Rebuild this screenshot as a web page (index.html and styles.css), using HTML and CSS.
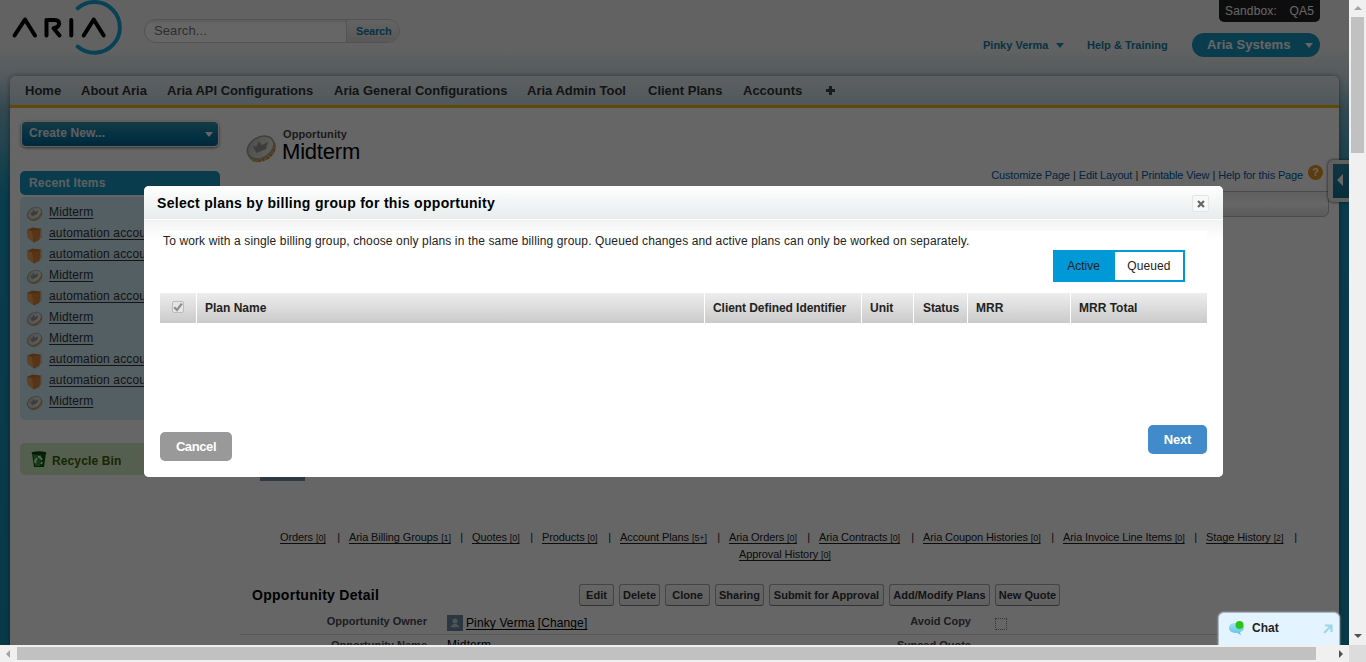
FILE: index.html
```html
<!DOCTYPE html>
<html lang="en">
<head>
<meta charset="utf-8">
<title>Opportunity: Midterm</title>
<link rel="stylesheet" href="styles.css">
</head>
<body>
<svg class="defs" width="0" height="0">
  <defs>
    <linearGradient id="face" x1="0" y1="0" x2="1" y2="1"><stop offset="0" stop-color="#c4c4c4"/><stop offset="1" stop-color="#f0f0ec"/></linearGradient>
    <linearGradient id="bubble" x1="0" y1="0" x2="0" y2="1"><stop offset="0" stop-color="#a6e0f2"/><stop offset="1" stop-color="#58c4e8"/></linearGradient>
    <symbol id="coin" viewBox="0 0 32 32">
      <ellipse cx="17" cy="18" rx="15" ry="11" transform="rotate(-32 17 18)" fill="#d9ab5c"/>
      <path d="M14 28l1 2M18 27l1 2M22 25l2 2M25 22l2 2M28 18l2 1" stroke="#a8741c" stroke-width="1"/>
      <ellipse cx="15.500" cy="15.500" rx="15" ry="11" transform="rotate(-32 15.500 15.500)" fill="#a3a39c"/>
      <ellipse cx="15.700" cy="15.500" rx="13.300" ry="9.400" transform="rotate(-32 15.700 15.500)" fill="url(#face)"/>
      <path d="M7.500 13.500l4 1.500 2-6 3.500 4 6-3-2 7-9.500 4z" fill="#999"/>
    </symbol>
    <symbol id="folder" viewBox="0 0 16 16">
      <path d="M10 3l4.500-1.500L15 10l-4 5z" fill="#d9b48c"/>
      <path d="M1 3.500L6 1.500l6 .5 1.500 1-1 9.500-4.500 3-6-4z" fill="#c9772f"/>
      <path d="M1 3.500l5 1.500 1 10-5.500-4z" fill="#f0a45c"/>
      <path d="M6 5l7-1.500-.8 9L7 15.500z" fill="#dd8638"/>
    </symbol>
  </defs>
</svg>
<div class="window">
  <div class="viewport">
    <header class="top">
      <svg class="logo" width="124" height="58" viewBox="0 0 124 58" fill="none" stroke-linecap="round" stroke-linejoin="round" stroke-width="4">
        <path d="M77.700 8.300A25.400 25.400 0 1 1 77.700 46.500" stroke="#17a3d6"/>
        <g stroke="#000"><path d="M14.500 35.500L25 19.500L35 35.500"/><path d="M46.500 35.500V20H54.500C59 20 60 23 58.500 25.500Q57.500 27.500 53.500 28.200L59.500 35.500"/><path d="M71.300 20V35.500"/><path d="M83.700 35.500L93.700 19.500L103.700 35.500"/></g>
      </svg>
      <div class="search"><span class="search-field">Search...</span><span class="search-button">Search</span></div>
      <div class="account">
        <div class="sandbox"><span>Sandbox:</span><span>QA5</span></div>
        <div class="links">
          <span class="user">Pinky Verma</span><i class="caret teal"></i>
          <span class="help">Help &amp; Training</span>
          <div class="app-menu"><span>Aria Systems</span><i class="caret white"></i></div>
        </div>
      </div>
    </header>
    <div class="page">
      <nav class="tabs"><span>Home</span><span>About Aria</span><span>Aria API Configurations</span><span>Aria General Configurations</span><span>Aria Admin Tool</span><span>Client Plans</span><span>Accounts</span><svg width="9" height="9" viewBox="0 0 9 9"><path d="M3 0h3v3h3v3H6v3H3V6H0V3h3z" fill="#444"/></svg></nav>
      <div class="columns">
        <aside class="sidebar">
          <div class="create"><span>Create New...</span><i class="caret white"></i></div>
          <div class="recent-title">Recent Items</div>
          <ul class="recent">
            <li><svg><use href="#coin"/></svg><a>Midterm</a></li>
            <li><svg><use href="#folder"/></svg><a>automation account 1</a></li>
            <li><svg><use href="#folder"/></svg><a>automation account 2</a></li>
            <li><svg><use href="#coin"/></svg><a>Midterm</a></li>
            <li><svg><use href="#folder"/></svg><a>automation account 3</a></li>
            <li><svg><use href="#coin"/></svg><a>Midterm</a></li>
            <li><svg><use href="#coin"/></svg><a>Midterm</a></li>
            <li><svg><use href="#folder"/></svg><a>automation account 4</a></li>
            <li><svg><use href="#folder"/></svg><a>automation account 5</a></li>
            <li><svg><use href="#coin"/></svg><a>Midterm</a></li>
          </ul>
          <div class="recycle">
            <svg width="16" height="17" viewBox="0 0 16 17"><path d="M1 2h14l-2 14H3z" fill="#0a5a10"/><path d="M2 3h8l-1 12H4z" fill="#2e9c35"/><ellipse cx="8" cy="2" rx="7.500" ry="1.700" fill="#123f14"/><path d="M5 12l-1-2 2-3M7 6h2l2 3M11 11l-1 2" fill="none" stroke="#e8f6e8" stroke-width="1.800"/></svg>
            <span>Recycle Bin</span>
          </div>
        </aside>
        <main class="record">
          <div class="record-head">
            <svg class="record-icon"><use href="#coin"/></svg>
            <div><div class="record-type">Opportunity</div><h1>Midterm</h1></div>
          </div>
          <div class="page-links"><a>Customize Page</a><i>|</i><a>Edit Layout</a><i>|</i><a>Printable View</a><i>|</i><a>Help for this Page</a><b>?</b></div>
          <div class="feed-bar"></div>
          <div class="avatar"></div>
          <div class="related">
            <span><a>Orders <small>[0]</small></a><i>|</i></span><span><a>Aria Billing Groups <small>[1]</small></a><i>|</i></span><span><a>Quotes <small>[0]</small></a><i>|</i></span><span><a>Products <small>[0]</small></a><i>|</i></span><span><a>Account Plans <small>[5+]</small></a><i>|</i></span><span><a>Aria Orders <small>[0]</small></a><i>|</i></span><span><a>Aria Contracts <small>[0]</small></a><i>|</i></span><span><a>Aria Coupon Histories <small>[0]</small></a><i>|</i></span><span><a>Aria Invoice Line Items <small>[0]</small></a><i>|</i></span><span><a>Stage History <small>[2]</small></a><i>|</i></span>
          </div>
          <div class="related-last"><a>Approval History <small>[0]</small></a></div>
          <div class="detail-head">
            <h2>Opportunity Detail</h2>
            <div class="actions"><span>Edit</span><span>Delete</span><span>Clone</span><span>Sharing</span><span>Submit for Approval</span><span>Add/Modify Plans</span><span>New Quote</span></div>
          </div>
          <div class="field-row">
            <b>Opportunity Owner</b>
            <div class="owner"><svg width="16" height="16" viewBox="0 0 16 16"><path fill="#708ba2" d="M0 0h16v16H0z"/><circle cx="8" cy="6" r="2.500" fill="#c8d2da"/><path d="M4 12.300v-1.500l2.800-1.800h2.400l2.800 1.800v1.500z" fill="#c8d2da"/></svg><a>Pinky Verma</a><a>[Change]</a></div>
            <b>Avoid Copy</b><i class="unchecked"></i>
          </div>
          <div class="field-row second"><b>Opportunity Name</b><div>Midterm</div><b>Synced Quote</b><i></i></div>
        </main>
      </div>
    </div>
    <div class="feed-tab"><div><i></i></div></div>
    <div class="shade"></div>
    <section class="dialog">
      <header><h3>Select plans by billing group for this opportunity</h3><span class="close"><svg width="8" height="8" viewBox="0 0 8 8"><path d="M1 1l6 6M7 1L1 7" stroke="#666" stroke-width="2.200"/></svg></span></header>
      <div class="dialog-body">
        <div class="content">
          <p>To work with a single billing group, choose only plans in the same billing group. Queued changes and active plans can only be worked on separately.</p>
          <div class="toggle"><span class="on">Active</span><span class="off">Queued</span></div>
          <div class="thead"><span><i class="check"><svg width="10" height="10" viewBox="0 0 10 10"><path d="M1.200 5.200L4 8L8.800 1.600" fill="none" stroke="#8f8f8f" stroke-width="2.300"/></svg></i></span><span>Plan Name</span><span class="ident">Client Defined Identifier</span><span>Unit</span><span class="status">Status</span><span>MRR</span><span>MRR Total</span></div>
          <div class="buttons"><span class="cancel">Cancel</span><span class="next">Next</span></div>
        </div>
      </div>
    </section>
    <div class="chat">
      <svg width="17" height="16" viewBox="0 0 17 16"><path d="M7 3C2 3 1 6 1 8c0 4 4 5 8 5l4 2-1-3c3-1 4-2 4-5 0-3-4-4-9-4z" fill="url(#bubble)"/><circle cx="11.500" cy="5" r="4" fill="#2bc51a"/></svg>
      <span>Chat</span>
      <svg width="10" height="10" viewBox="0 0 10 10"><path d="M1 9L8 2M2 1.500H8.500V8" fill="none" stroke="#9fd6ea" stroke-width="2.200"/></svg>
    </div>
  </div>
  <div class="vbar"><i class="up"></i><div></div><i class="down"></i></div>
  <div class="hbar"><i class="left"></i><div></div><i class="right"></i></div>
  <div class="corner"></div>
</div>
</body>
</html>
```
FILE: styles.css
```css
* { box-sizing: border-box; }
body { margin: 0; overflow: hidden; font: 12px/14px "Liberation Sans", Arial, sans-serif; color: #222; }
i { font-style: normal; }
h1, h2, h3, p, ul { margin: 0; padding: 0; }
.defs { position: absolute; }
.window { display: grid; grid-template: 645px 17px / 1349px 17px; width: 1366px; height: 662px; }
.viewport { position: relative; overflow: hidden; background: linear-gradient(#f5f5f5 0, #f5f5f5 48px, #d3e3e8 76px, #7db5c8 110px, #1797c0 195px, #178fb5 645px); white-space: nowrap; }

.caret { width: 0; height: 0; border: 4px solid transparent; border-top: 5px solid #fff; border-bottom: 0; }
.caret.teal { border-top-color: #1797c0; }

.top { display: flex; height: 76px; }
.logo { flex: none; width: 124px; }
.search { display: flex; width: 256px; height: 24px; margin: 19px 0 0 20px; border: 1px solid #cfcfcf; border-radius: 12px; overflow: hidden; background: linear-gradient(#e2e2e2, #fff 4px); }
.search-field { width: 201px; padding-left: 9px; font-size: 13px; line-height: 22px; color: #777; letter-spacing: .1px; }
.search-button { flex: 1; padding-left: 9px; border-left: 1px solid #cfcfcf; background: linear-gradient(#f8f8f8, #dedede); font-weight: bold; font-size: 11px; line-height: 23px; color: #1680a5; letter-spacing: -.2px; }
.account { display: flex; flex-direction: column; width: 337px; margin-left: auto; margin-right: 29px; }
.sandbox { display: flex; justify-content: space-between; width: 101px; height: 22px; margin-left: auto; padding: 3px 6px 0; border-radius: 0 0 5px 5px; background: #222; color: #fff; line-height: 16px; letter-spacing: .15px; }
.links { display: flex; align-items: center; height: 24px; margin-top: 11px; font-weight: bold; font-size: 11px; color: #1680a5; }
.user { width: 73px; }
.help { width: 105px; margin-left: 23px; }
.app-menu { display: flex; align-items: center; justify-content: space-between; width: 128px; height: 24px; padding: 0 7px 0 15px; border-radius: 12px; background: #1797c0; color: #fff; font-size: 13px; letter-spacing: .1px; }

.page { width: 1329px; height: 600px; margin-left: 10px; border-radius: 6px 6px 0 0; background: #fff; box-shadow: 0 0 5px rgba(0,0,0,.4); }
.tabs { display: grid; grid-template-columns: 56px 86px 167px 193px 121px 95px 83px 9px; align-items: center; height: 32px; padding: 0 15px; border-bottom: 3px solid #e8b715; border-radius: 6px 6px 0 0; background: linear-gradient(#eaf0f2, #ccdde4); font-size: 13px; font-weight: bold; color: #333; }
.columns { display: flex; }

.sidebar { width: 210px; padding: 13px 0 0 10px; }
.create { display: flex; justify-content: space-between; height: 26px; margin: 0 1px; padding: 4px 5px 0 7px; border: 1px solid #eee; border-radius: 5px; box-shadow: 0 1px 3px #777; background: linear-gradient(#3a8fae, #087aa8 60%, #006690); color: #eee; font-weight: bold; letter-spacing: .1px; }
.create .caret { margin-top: 6px; }
.recent-title { height: 24px; margin-top: 24px; padding: 5px 9px; border-radius: 5px; background: #1797c0; color: #e6eef2; font-weight: bold; letter-spacing: .15px; }
.recent { height: 223px; margin-top: 2px; padding: 5px 6px; border-radius: 5px; background: #cfeef8; list-style: none; overflow: hidden; }
.recent li { display: flex; height: 21px; line-height: 20px; color: #333; }
.recent svg { flex: none; width: 17px; height: 17px; margin: 3px 6px 0 0; }
.recent a { letter-spacing: .15px; text-decoration: underline; text-underline-offset: 2px; }
.recycle { display: flex; align-items: center; height: 32px; margin-top: 23px; padding-left: 11px; border-radius: 5px; background: #d5edc9; color: #3b6100; font-weight: bold; }
.recycle span { margin: 3px 0 0 5px; letter-spacing: .12px; }

.record { width: 1119px; padding: 20px 10px 0 32px; }
.record-head { display: flex; height: 40px; margin-left: -10px; }
.record-icon { width: 32px; height: 32px; margin: 4px 6px 0 3px; }
.record-type { line-height: 13px; font-size: 11px; font-weight: bold; color: #444; letter-spacing: .1px; }
h1 { margin-left: -1px; font-size: 22px; line-height: 22px; font-weight: normal; color: #000; letter-spacing: -.2px; }
.page-links { display: flex; justify-content: flex-end; height: 23px; padding-right: 6px; font-size: 11px; line-height: 15px; color: #015ba7; letter-spacing: -.15px; }
.page-links i { width: 9px; text-align: center; color: #333; }
.page-links b { width: 15px; height: 15px; margin: -3px 0 0 5px; border-radius: 50%; background: #e7961c; text-align: center; color: #fff; }
.feed-bar { height: 26px; border: 1px solid #bbb; border-radius: 0 0 6px 0; background: linear-gradient(#eee, #fff 12px, #e4e4e4); }
.avatar { width: 45px; height: 45px; margin: 219px 0 0 8px; background: #738fa5; }
.related { display: grid; grid-template-columns: 69px 123px 70px 78px 109px 90px 104px 140px 143px 100px; height: 17px; margin: 49px 0 0 28px; font-size: 11px; letter-spacing: -.1px; }
.related span { display: flex; justify-content: space-between; padding-right: 9px; }
.related a, .related-last a, .owner a { text-decoration: underline; text-underline-offset: 1.5px; }
.related small, .related-last small { font-size: 9px; }
.related-last { padding-left: 487px; font-size: 11px; letter-spacing: -.1px; }
.detail-head { display: flex; align-items: center; height: 22px; margin-top: 22px; }
h2 { width: 327px; font-size: 14px; color: #000; letter-spacing: .28px; }
.actions { display: grid; grid-template-columns: 35px 41px 45px 49px 115px 101px 65px; column-gap: 5px; height: 22px; }
.actions span { border: 1px solid #aaa; border-bottom-color: #7f7f7f; border-radius: 3px; background: linear-gradient(#fff, #f0f0f0); text-align: center; font-size: 11px; font-weight: bold; line-height: 20px; color: #333; }
.field-row { display: grid; grid-template-columns: 187px 384px 160px 12px; height: 29px; margin-left: -12px; border-bottom: 1px solid #ddd; font-size: 12px; color: #000; }
.field-row b { padding-top: 8px; color: #4a4a56; font-size: 11px; text-align: right; }
.field-row > :nth-child(2) { padding: 9px 0 0 20px; }
.owner { display: flex; letter-spacing: .12px; }
.owner svg { margin-right: 3px; }
.owner a { line-height: 17px; margin-right: 3px; }
.unchecked { width: 12px; height: 12px; margin: 12px 0 0 24px; border: 1px dotted #888; }
.field-row.second b { padding-top: 3px; }
.field-row.second > div { padding-top: 3px; letter-spacing: .1px; }

.feed-tab { position: absolute; left: 1328px; top: 160px; width: 25px; height: 42px; padding: 4px 0 4px 5px; border-radius: 5px; background: #eee; box-shadow: 0 0 3px #333; }
.feed-tab div { height: 34px; padding: 10px 0 0 4px; background: linear-gradient(#2a86a6, #147296); }
.feed-tab i { display: block; width: 0; border: 6px solid transparent; border-right-color: #fff; border-left: 0; }
.shade { position: absolute; inset: 0; background: rgba(0,0,0,.6); }

.dialog { position: absolute; left: 144px; top: 186px; width: 1079px; height: 291px; border-radius: 5px; background: #fff; overflow: hidden; }
.dialog header { display: flex; justify-content: space-between; height: 34px; padding: 9px 14px 0 13px; border-bottom: 1px solid #fff; background: linear-gradient(#fff, #e7ecec); }
h3 { font-size: 14px; line-height: 16px; color: #000; letter-spacing: .29px; }
.close { display: flex; align-items: center; justify-content: center; width: 17px; height: 17px; border: 1px solid #e3e6e6; border-radius: 2px; background: #f7f8f8; }
.dialog-body { height: 257px; padding: 11px 16px 0; background: linear-gradient(#f3f3f3, #fff 20px); }
.content { height: 246px; background: #fff; }
.content p { height: 19px; padding: 3px 0 0 3px; letter-spacing: .128px; }
.toggle { display: flex; width: 132px; height: 32px; margin-left: 893px; border: 2px solid #0099d8; line-height: 28px; text-align: center; }
.on { width: 60px; padding-right: 3px; background: #0099d8; }
.off { flex: 1; letter-spacing: .1px; }
.thead { display: grid; grid-template-columns: 36px 507px 156px 51px 53px 102px 136px; column-gap: 1px; height: 30px; margin-top: 11px; font-weight: bold; line-height: 30px; }
.thead span { padding-left: 8px; background: linear-gradient(#ededed, #cacaca); }
.thead .ident { letter-spacing: -.06px; }
.thead .status { padding-left: 9px; letter-spacing: -.1px; }
.thead .check { display: flex; align-items: center; justify-content: center; width: 12px; height: 12px; margin: 8px 0 0 4px; border: 1px solid #bbb; border-radius: 2px; background: #e6e6e6; }
.buttons { display: flex; justify-content: space-between; margin-top: 102px; color: #fff; font-size: 13px; font-weight: bold; line-height: 29px; text-align: center; }
.cancel { width: 72px; height: 29px; margin-top: 7px; border-radius: 5px; background: #999; letter-spacing: -.4px; }
.next { width: 59px; height: 29px; border-radius: 5px; background: #428bca; letter-spacing: -.2px; }

.chat { position: absolute; left: 1218px; top: 612px; display: flex; width: 122px; height: 40px; padding: 7px 6px 0 9px; border: 1px solid #aab8c0; border-radius: 6px 6px 0 0; background: #e3f3ff; box-shadow: 0 0 2px #bbb; font-weight: bold; color: #222; }
.chat span { flex: 1; margin: 1px 0 0 7px; }
.chat svg:last-child { margin-top: 4px; }

.vbar { display: grid; grid-template-rows: 17px 136px 1fr; justify-items: center; background: #f0f0f0; }
.vbar div, .hbar div { background: #c1c1c1; }
.vbar div { width: 13px; }
.vbar i { width: 0; height: 0; border: 4px solid transparent; }
.vbar .up { margin-top: 6px; border-top: 0; border-bottom-color: #a3a3a3; }
.vbar .down { align-self: end; margin-bottom: 7px; border-bottom: 0; border-top-color: #505050; }
.hbar { display: grid; grid-template-columns: 17px 1299px 1fr; align-items: center; background: #f0f0f0; }
.hbar div { height: 13px; }
.hbar i { width: 0; height: 0; border: 4px solid transparent; }
.hbar .left { margin-left: 6px; border-left: 0; border-right-color: #a3a3a3; }
.hbar .right { justify-self: end; margin-right: 6px; border-right: 0; border-left-color: #505050; }
.corner { background: #dcdcdc; }
```
